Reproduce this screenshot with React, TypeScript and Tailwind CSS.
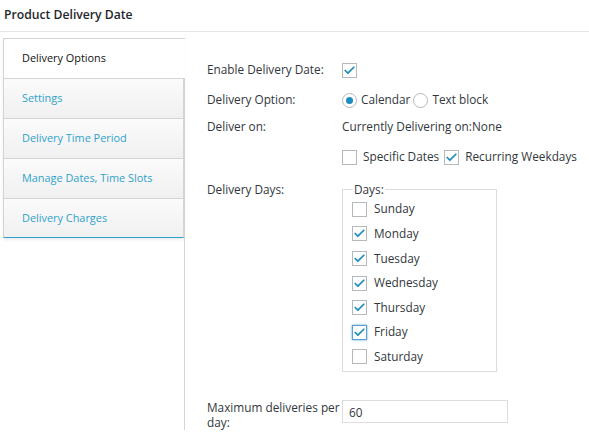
import { Check } from "lucide-react";

const tabs = ["Delivery Options", "Settings", "Delivery Time Period", "Manage Dates, Time Slots", "Delivery Charges"];
const days = [
  { name: "Sunday", on: false },
  { name: "Monday", on: true },
  { name: "Tuesday", on: true },
  { name: "Wednesday", on: true },
  { name: "Thursday", on: true },
  { name: "Friday", on: true, focus: true },
  { name: "Saturday", on: false },
];

function Box({ on, focus }: { on: boolean; focus?: boolean }) {
  return (
    <span
      className={`flex h-[15px] w-[15px] shrink-0 items-center justify-center border bg-white ${
        focus ? "border-[#5b9dd9] shadow-[0_0_2px_rgba(30,140,190,0.8)]" : "border-[#b4b9be]"
      }`}
    >
      {on && <Check className="h-[13px] w-[13px] text-[#1e8cbe]" strokeWidth={3.2} />}
    </span>
  );
}

function Radio({ on }: { on: boolean }) {
  return (
    <span className="flex h-[15px] w-[15px] shrink-0 items-center justify-center rounded-full border border-[#b4b9be] bg-white">
      {on && <span className="h-[7px] w-[7px] rounded-full bg-[#1e8cbe]" />}
    </span>
  );
}

export default function App() {
  return (
    <div className="h-[441px] w-[589px] overflow-hidden bg-white font-['Open_Sans',sans-serif] text-[11.8px] text-[#32373c]">
      <div className="flex h-[32px] items-center border-b border-[#e5e5e5] pl-[4px] pb-[1px] text-[12.2px] font-semibold text-[#23282d]">
        Product Delivery Date
      </div>
      <div className="mt-[6px] flex pl-[3px]">
        <ul className="w-[181px] shrink-0 self-start text-[10.9px] shadow-[0_2px_3px_rgba(0,0,0,0.08)]">
          {tabs.map((t, i) =>
            i === 0 ? (
              <li key={t} className="relative z-10 -mr-px flex h-[40px] items-start border-l border-t border-[#d4d4d4] bg-white pl-[18px] pt-[11px] text-[#111]">
                {t}
              </li>
            ) : (
              <li
                key={t}
                className="flex h-[40px] items-center border border-t-[#d4d4d4] border-x-[#d4d4d4] border-b-0 bg-gradient-to-b from-[#fbfbfb] to-[#f1f0f1] pl-[18px] text-[#2ea2cc] last:border-b"
              >
                {t}
              </li>
            )
          )}
        </ul>
        <div className="flex-1 border-l border-[#d4d4d4] pl-[22px] pt-[17px]">
          <div className="flex h-[30px] items-center">
            <span className="w-[135px]">Enable Delivery Date:</span>
            <Box on />
          </div>
          <div className="flex h-[30px] items-center">
            <span className="w-[135px]">Delivery Option:</span>
            <Radio on />
            <span className="ml-[4px]">Calendar</span>
            <span className="ml-[3px]"><Radio on={false} /></span>
            <span className="ml-[4px]">Text block</span>
          </div>
          <div className="flex h-[24px] items-center">
            <span className="w-[135px]">Deliver on:</span>
            <span>Currently Delivering on:None</span>
          </div>
          <div className="mt-[6px] flex h-[24px] items-center pl-[135px]">
            <Box on={false} />
            <span className="ml-[6px]">Specific Dates</span>
            <span className="ml-[5px]"><Box on /></span>
            <span className="ml-[6px]">Recurring Weekdays</span>
          </div>
          <div className="mt-[13px] flex">
            <span className="w-[135px] -mt-[1px]">Delivery Days:</span>
            <fieldset className="w-[155px] border border-[#dcdcdc] pb-[2px] pl-[9px]">
              <legend className="ml-[1px] px-[1px] leading-[15px]">Days:</legend>
              {days.map((d) => (
                <div key={d.name} className="flex h-[24.6px] items-center">
                  <Box on={d.on} focus={d.focus} />
                  <span className="ml-[7px]">{d.name}</span>
                </div>
              ))}
            </fieldset>
          </div>
          <div className="mt-[28px] flex">
            <span className="w-[135px] whitespace-nowrap leading-[15px]">
              Maximum deliveries per
              <br />
              day:
            </span>
            <input
              readOnly
              value="60"
              className="h-[23px] w-[166px] border border-[#ddd] px-[6px] text-[11.8px] text-[#32373c] outline-none"
            />
          </div>
        </div>
      </div>
    </div>
  );
}
